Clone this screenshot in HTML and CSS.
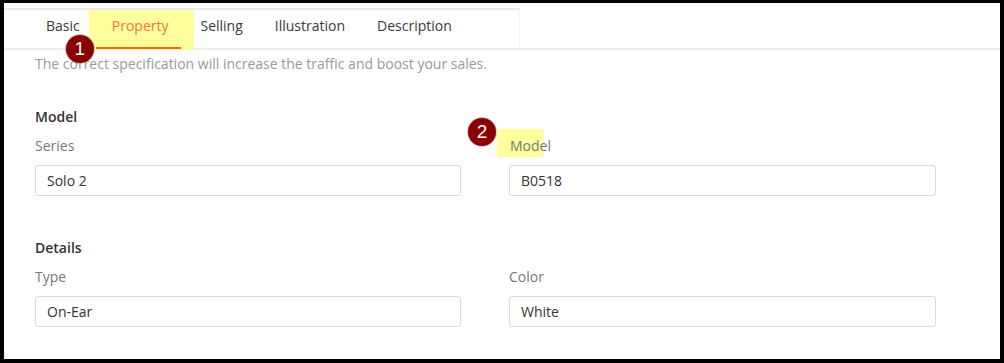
FILE: index.html
```html
<!DOCTYPE html>
<html lang="en">
<head>
    <meta charset="UTF-8">
    <title>Product Property</title>
    <link rel="stylesheet" href="styles.css">
</head>
<body>
    <div class="page">
        <header class="tab-header">
            <ul class="tabs">
                <li class="tab">Basic</li>
                <li class="tab active">
                    <span class="mark"></span>
                    <span class="tab-label">Property</span>
                    <span class="step step-one">1</span>
                </li>
                <li class="tab">Selling</li>
                <li class="tab">Illustration</li>
                <li class="tab">Description</li>
            </ul>
        </header>

        <div class="content">
            <p class="hint">The correct specification will increase the traffic and boost your sales.</p>

            <section class="group">
                <h3 class="group-title">Model</h3>
                <div class="fields">
                    <div class="field">
                        <label class="field-label">Series</label>
                        <input class="field-input" type="text" value="Solo 2" readonly>
                    </div>
                    <div class="field">
                        <label class="field-label marked">
                            <span class="mark-label"></span>
                            <span class="step step-two">2</span>
                            <span class="label-text">Model</span>
                        </label>
                        <input class="field-input" type="text" value="B0518" readonly>
                    </div>
                </div>
            </section>

            <section class="group">
                <h3 class="group-title">Details</h3>
                <div class="fields">
                    <div class="field">
                        <label class="field-label">Type</label>
                        <input class="field-input" type="text" value="On-Ear" readonly>
                    </div>
                    <div class="field">
                        <label class="field-label">Color</label>
                        <input class="field-input" type="text" value="White" readonly>
                    </div>
                </div>
            </section>
        </div>
    </div>
</body>
</html>
```

FILE: styles.css
```css
* {
    box-sizing: border-box;
}

body {
    margin: 0;
    height: 363px;
    background: #000;
    padding: 3px 4px 4px 4px;
    font-family: 'Open Sans', 'Liberation Sans', sans-serif;
    font-size: 14px;
    line-height: 20px;
    overflow: hidden;
}

.page {
    height: 356px;
    background: #fff;
}

/* ===== TABS ===== */
.tab-header {
    padding-top: 5px;
    border-bottom: 2px solid #ececec;
}

.tabs {
    display: flex;
    width: 516px;
    margin: 0;
    padding: 0 0 0 26px;
    list-style: none;
    border-top: 2px solid #e9e9e9;
    border-right: 1px solid #f3f3f3;
}

.tab {
    position: relative;
    height: 38px;
    padding: 6px 16px 0;
    color: #3a3a3a;
}

.tab.active {
    z-index: 0;
    color: #f47443;
}

.tab-label {
    position: relative;
}

.tab.active::after {
    content: '';
    position: absolute;
    left: 0;
    right: 3px;
    bottom: -1px;
    height: 2px;
    background: #ff6210;
}

.mark {
    position: absolute;
    left: -7px;
    top: 0;
    width: 105px;
    height: 40px;
    background: #ffff9c;
    z-index: -1;
}

/* annotation badges */
.step {
    position: absolute;
    width: 28px;
    height: 28px;
    border-radius: 50%;
    background: #8a0000;
    box-shadow: 0 0 0 1px rgba(150, 150, 150, 0.5);
    color: #fff;
    font-family: 'Liberation Sans', Arial, sans-serif;
    font-size: 19px;
    line-height: 27px;
    text-align: center;
    z-index: 5;
}

.step-one {
    left: -30px;
    top: 25px;
}

/* ===== FORM ===== */
.content {
    padding: 4px 31px 0;
}

.hint {
    margin: 0;
    color: #999;
}

.group {
    margin-top: 33px;
}

.group + .group {
    margin-top: 42px;
}

.group-title {
    margin: 0 0 9px;
    font-size: 14px;
    font-weight: 600;
    color: #333;
}

.fields {
    display: grid;
    grid-template-columns: 426px 427px;
    column-gap: 48px;
}

.field {
    display: flex;
    flex-direction: column;
    gap: 9px;
}

.field-label {
    color: #777;
}

.marked {
    position: relative;
    z-index: 0;
}

.label-text {
    position: relative;
    padding-left: 1px;
}

.mark-label {
    position: absolute;
    left: -12px;
    top: -7px;
    width: 47px;
    height: 28px;
    background: #ffff9c;
    border-right: 1px solid #f4f4f4;
    z-index: -1;
}

.step-two {
    left: -41px;
    top: -18px;
}

.field-input {
    height: 31px;
    padding: 0 11px;
    border: 1px solid #dadada;
    border-radius: 3px;
    font-family: 'Open Sans', 'Liberation Sans', sans-serif;
    font-size: 14px;
    color: #333;
    outline: none;
}
```
